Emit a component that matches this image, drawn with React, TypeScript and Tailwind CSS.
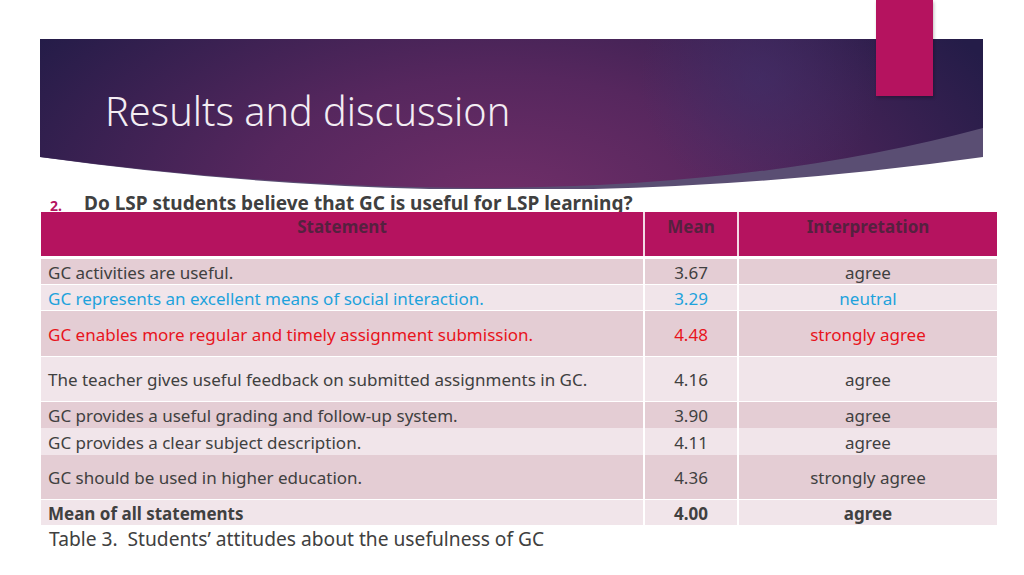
import React from 'react';

type Row = {
  statement: string;
  mean: string;
  interp: string;
  h: string;
  dark: boolean;
  tone?: 'blue' | 'red';
  bold?: boolean;
  line?: boolean;
};

const rows: Row[] = [
  { statement: 'GC activities are useful.', mean: '3.67', interp: 'agree', h: 'h-[26px]', dark: true, line: true },
  { statement: 'GC represents an excellent means of social interaction.', mean: '3.29', interp: 'neutral', h: 'h-[26px]', dark: false, tone: 'blue', line: true },
  { statement: 'GC enables more regular and timely assignment submission.', mean: '4.48', interp: 'strongly agree', h: 'h-[46px]', dark: true, tone: 'red', line: true },
  { statement: 'The teacher gives useful feedback on submitted assignments in GC.', mean: '4.16', interp: 'agree', h: 'h-[45px]', dark: false, line: true },
  { statement: 'GC provides a useful grading and follow-up system.', mean: '3.90', interp: 'agree', h: 'h-[26px]', dark: true },
  { statement: 'GC provides a clear subject description.', mean: '4.11', interp: 'agree', h: 'h-[27px]', dark: false },
  { statement: 'GC should be used in higher education.', mean: '4.36', interp: 'strongly agree', h: 'h-[45px]', dark: true, line: true },
  { statement: 'Mean of all statements', mean: '4.00', interp: 'agree', h: 'h-[25px]', dark: false, bold: true },
];

const Banner = () => (
  <div className="relative ml-[40px] mt-[39px] w-[943px] h-[150px]">
    <svg className="absolute inset-0" width="943" height="150" viewBox="0 0 943 150">
      <defs>
        <radialGradient id="bg" cx="460" cy="175" r="560" gradientUnits="userSpaceOnUse" gradientTransform="translate(460 175) scale(1 0.55) translate(-460 -175)">
          <stop offset="0" stopColor="#722f69" />
          <stop offset="0.45" stopColor="#56275e" />
          <stop offset="1" stopColor="#241c48" />
        </radialGradient>
        <radialGradient id="glow" cx="720" cy="40" r="120" gradientUnits="userSpaceOnUse">
          <stop offset="0" stopColor="#41306a" stopOpacity="0.6" />
          <stop offset="1" stopColor="#41306a" stopOpacity="0" />
        </radialGradient>
      </defs>
      <path d="M0,0 H943 V118 Q471,184 0,118 Z" fill="#5a4e73" />
      <path d="M0,0 H943 V89 Q560,192 0,118 Z" fill="url(#bg)" />
      <path d="M0,0 H943 V89 Q560,192 0,118 Z" fill="url(#glow)" />
    </svg>
    <h1 className="relative pl-[65px] pt-[48px] text-[39.6px] leading-[48px] font-light text-[#f3edf3]">
      Results and discussion
    </h1>
  </div>
);

export default function App() {
  return (
    <div className="relative w-[1024px] h-[575px] overflow-hidden bg-white font-['Noto_Sans',sans-serif] text-[#404040]">
      <Banner />
      <div className="absolute left-[876px] top-0 w-[57px] h-[96px] bg-[#b5135f] shadow-[1px_2px_3px_rgba(0,0,0,0.25)]" />

      <div className="h-[23px] overflow-hidden flex items-start pt-[2px]">
        <span className="w-[84px] pl-[50px] pt-[5px] text-[14px] leading-[20px] font-bold text-[#b5135f]">2.</span>
        <span className="text-[19px] leading-[25px] font-bold">Do LSP students believe that GC is useful for LSP learning?</span>
      </div>

      <div className="ml-[41px] w-[956px] text-[17px]">
        <div className="flex h-[44px] bg-[#b5135f] font-bold text-[#55213f] border-b-[3px] border-white box-content">
          <div className="w-[602px] text-center pt-[4px] leading-[22px]">Statement</div>
          <div className="w-[94px] border-l-2 border-[#f3d9e4] text-center pt-[4px] leading-[22px]">Mean</div>
          <div className="w-[260px] border-l-2 border-[#f3d9e4] text-center pt-[4px] leading-[22px]">Interpretation</div>
        </div>
        {rows.map((r, i) => (
          <div
            key={i}
            className={`flex ${r.h} ${r.dark ? 'bg-[#e4cdd4]' : 'bg-[#f1e5ea]'} ${r.line ? 'border-b border-white' : ''} ${r.bold ? 'font-bold' : ''} ${r.tone === 'blue' ? 'text-[#1ea2dc]' : r.tone === 'red' ? 'text-[#e8141c]' : ''}`}
          >
            <div className="w-[602px] pl-[7px] pt-[2px] flex items-center leading-[22px]">{r.statement}</div>
            <div className="w-[94px] pt-[2px] border-l-2 border-white flex items-center justify-center leading-[22px]">{r.mean}</div>
            <div className="w-[260px] pt-[2px] border-l-2 border-white flex items-center justify-center leading-[22px]">{r.interp}</div>
          </div>
        ))}
      </div>

      <p className="pl-[49px] pt-[1px] text-[19.2px] leading-[26px] text-[#404040]">
        Table 3.&nbsp; Students’ attitudes about the usefulness of GC
      </p>
    </div>
  );
}
